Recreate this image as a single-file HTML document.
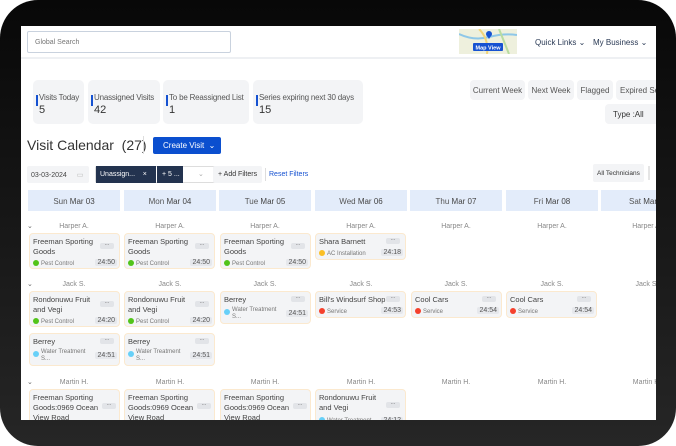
<!DOCTYPE html>
<html><head><meta charset="utf-8"><style>
*{box-sizing:border-box;margin:0;padding:0}
body{width:676px;height:446px;background:#fff;font-family:"Liberation Sans",sans-serif;position:relative;overflow:hidden}
.frame{position:absolute;left:0;top:0;width:676px;height:446px;border-radius:38px;background:linear-gradient(180deg,#080808,#1a1a1a 60%,#262626)}
.scr{position:absolute;left:21px;top:26px;width:635px;height:394px;background:#fff;overflow:hidden}
.a{position:absolute}
.t{font-size:8px;color:#333;white-space:nowrap}
.stat{position:absolute;top:54px;height:44px;background:#f3f4f6;border-radius:5px}
.stat .bar{position:absolute;left:3px;top:15px;width:2px;height:11px;background:#1652d1}
.stat .l{position:absolute;left:6px;top:13px;font-size:8px;letter-spacing:-0.2px;color:#555;white-space:nowrap}
.stat .n{position:absolute;left:6px;top:24px;font-size:11px;color:#333}
.btn{position:absolute;top:54px;height:20px;background:#f3f4f6;border-radius:4px;font-size:8px;color:#555;padding-top:6px;text-align:center;white-space:nowrap}
.dh{position:absolute;top:164px;width:92px;height:21px;background:#e3ecfa;font-size:8px;color:#555;text-align:center;padding-top:7px}
.dh b{color:#444;font-weight:normal}
.nm{position:absolute;font-size:7px;color:#888;width:92px;text-align:center}
.c{position:absolute;width:91px;background:#f3f4f6;border:1px solid #fbe9cf;border-radius:4px}
.c .ti{position:absolute;left:3px;top:3px;font-size:7.5px;color:#444;line-height:10px;width:70px}
.c .d{position:absolute;right:5px;width:14px;height:6px;background:#e2e4e8;border-radius:2px;font-size:5px;line-height:4px;text-align:center;color:#444}
.c .s{position:absolute;left:3px;font-size:6px;color:#777;white-space:nowrap}
.c .s i{display:inline-block;width:6px;height:6px;border-radius:50%;vertical-align:-1px;margin-right:2px}
.c .tm{position:absolute;right:2px;font-size:7px;color:#555;background:#e6e8ec;padding:0 2px;border-radius:2px}
.chev{position:absolute;left:6px;font-size:7px;color:#666}
</style></head><body>
<div class="frame"></div>
<div class="scr">
 <div class="a" style="left:6px;top:5px;width:204px;height:22px;border:1px solid #c9d2de;border-radius:2px"></div>
 <div class="a t" style="left:14px;top:13px;font-size:7px;color:#777">Global Search</div>
 <div class="a" style="left:0;top:31px;width:635px;height:2px;background:#eef0f3"></div>
 <svg class="a" style="left:438px;top:3px" width="58" height="25" viewBox="0 0 58 25"><rect width="58" height="25" fill="#eef0dd"/><path d="M0 5 Q15 12 30 8 T58 6" stroke="#8ec7e8" stroke-width="2" fill="none"/><path d="M20 0 Q30 10 28 25" stroke="#f2d47a" stroke-width="2" fill="none"/><path d="M40 0 L50 25" stroke="#b8dca0" stroke-width="2" fill="none"/><circle cx="30" cy="5" r="3" fill="#1652d1"/><path d="M27.5 6 L30 10 L32.5 6z" fill="#1652d1"/><rect x="14" y="14" width="30" height="8" rx="1" fill="#1652d1"/><text x="29" y="20.3" font-size="5.5" fill="#fff" text-anchor="middle" font-family="Liberation Sans" font-weight="bold">Map View</text></svg>
 <div class="a t" style="left:514px;top:12px;font-size:8px;color:#2a3a55">Quick Links ⌄</div>
 <div class="a t" style="left:572px;top:12px;font-size:8px;color:#2a3a55">My Business ⌄</div>

 <div class="stat" style="left:12px;width:51px"><div class="bar"></div><div class="l">Visits Today</div><div class="n">5</div></div>
 <div class="stat" style="left:67px;width:72px"><div class="bar"></div><div class="l">Unassigned Visits</div><div class="n">42</div></div>
 <div class="stat" style="left:142px;width:86px"><div class="bar"></div><div class="l">To be Reassigned List</div><div class="n">1</div></div>
 <div class="stat" style="left:232px;width:110px"><div class="bar"></div><div class="l">Series expiring next 30 days</div><div class="n">15</div></div>
 <div class="btn" style="left:449px;width:55px">Current Week</div>
 <div class="btn" style="left:507px;width:46px">Next Week</div>
 <div class="btn" style="left:556px;width:36px">Flagged</div>
 <div class="btn" style="left:595px;width:50px;text-align:left;padding-left:4px">Expired Se</div>
 <div class="btn" style="left:584px;top:78px;width:60px;color:#333;text-align:left;padding-left:8px">Type :All</div>

 <div class="a" style="left:6px;top:111px;font-size:14px;color:#333;white-space:nowrap">Visit Calendar &nbsp;(27)</div>
 <div class="a" style="left:122px;top:110px;width:1px;height:18px;background:#ddd"></div>
 <div class="a" style="left:132px;top:111px;width:68px;height:17px;background:#0b4fcf;border-radius:2px;color:#fff;font-size:8px;padding:4px 0 0 10px;white-space:nowrap">Create Visit &nbsp;⌄</div>

 <div class="a" style="left:6px;top:140px;width:62px;height:17px;background:#f3f4f6;border-radius:2px;font-size:7px;color:#444;padding:5px 0 0 4px;white-space:nowrap">03-03-2024 <span style="color:#bbb;margin-left:8px">▭</span></div>
 <div class="a" style="left:74px;top:140px;width:130px;height:17px;border:1px solid #ddd;border-radius:2px"></div>
 <div class="a" style="left:75px;top:140px;width:60px;height:17px;background:#23334f;color:#fff;font-size:7px;padding:5px 0 0 4px;white-space:nowrap">Unassign... &nbsp;&nbsp; ×</div>
 <div class="a" style="left:136px;top:140px;width:26px;height:17px;background:#23334f;color:#fff;font-size:7px;padding:5px 0 0 5px;white-space:nowrap">+ 5 ...</div>
 <div class="a t" style="left:177px;top:144px;color:#aaa;font-size:7px">⌄</div>
 <div class="a" style="left:192px;top:140px;width:49px;height:17px;background:#f3f4f6;border-radius:2px;font-size:7px;color:#333;padding:5px 0 0 5px;white-space:nowrap">+ Add Filters</div>
 <div class="a" style="left:244px;top:142px;width:1px;height:13px;background:#ddd"></div>
 <div class="a t" style="left:248px;top:145px;font-size:7px;color:#1652d1">Reset Filters</div>
 <div class="a" style="left:572px;top:138px;width:51px;height:18px;background:#f3f4f6;border-radius:2px;font-size:6.5px;color:#333;padding:6px 0 0 4px;white-space:nowrap">All Technicians</div>
 <div class="a" style="left:627px;top:140px;width:2px;height:14px;background:#e5e5e5"></div>

 <div class="dh" style="left:7px">Sun <b>Mar 03</b></div>
 <div class="dh" style="left:103px">Mon <b>Mar 04</b></div>
 <div class="dh" style="left:198px">Tue <b>Mar 05</b></div>
 <div class="dh" style="left:294px">Wed <b>Mar 06</b></div>
 <div class="dh" style="left:389px">Thu <b>Mar 07</b></div>
 <div class="dh" style="left:485px">Fri <b>Mar 08</b></div>
 <div class="dh" style="left:580px;text-align:left;padding-left:28px;white-space:nowrap">Sat <b>Mar 09</b></div>

 <div class="chev" style="top:196px">⌄</div><div class="chev" style="top:254px">⌄</div><div class="chev" style="top:352px">⌄</div>
 <div class="nm" style="left:7px;top:197px">Harper A.</div><div class="nm" style="left:103px;top:197px">Harper A.</div><div class="nm" style="left:198px;top:197px">Harper A.</div><div class="nm" style="left:294px;top:197px">Harper A.</div><div class="nm" style="left:389px;top:197px">Harper A.</div><div class="nm" style="left:485px;top:197px">Harper A.</div><div class="nm" style="left:580px;top:197px">Harper A.</div>
 <div class="nm" style="left:7px;top:255px">Jack S.</div><div class="nm" style="left:103px;top:255px">Jack S.</div><div class="nm" style="left:198px;top:255px">Jack S.</div><div class="nm" style="left:294px;top:255px">Jack S.</div><div class="nm" style="left:389px;top:255px">Jack S.</div><div class="nm" style="left:485px;top:255px">Jack S.</div><div class="nm" style="left:580px;top:255px">Jack S.</div>
 <div class="nm" style="left:7px;top:353px">Martin H.</div><div class="nm" style="left:103px;top:353px">Martin H.</div><div class="nm" style="left:198px;top:353px">Martin H.</div><div class="nm" style="left:294px;top:353px">Martin H.</div><div class="nm" style="left:389px;top:353px">Martin H.</div><div class="nm" style="left:485px;top:353px">Martin H.</div><div class="nm" style="left:580px;top:353px">Martin H.</div>

 <div class="c" style="left:8px;top:207px;height:36px"><div class="ti">Freeman Sporting Goods</div><div class="d" style="top:9px">···</div><div class="s" style="top:26px"><i style="background:#52c41a"></i>Pest Control</div><div class="tm" style="top:25px">24:50</div></div>
 <div class="c" style="left:103px;top:207px;height:36px"><div class="ti">Freeman Sporting Goods</div><div class="d" style="top:9px">···</div><div class="s" style="top:26px"><i style="background:#52c41a"></i>Pest Control</div><div class="tm" style="top:25px">24:50</div></div>
 <div class="c" style="left:199px;top:207px;height:36px"><div class="ti">Freeman Sporting Goods</div><div class="d" style="top:9px">···</div><div class="s" style="top:26px"><i style="background:#52c41a"></i>Pest Control</div><div class="tm" style="top:25px">24:50</div></div>
 <div class="c" style="left:294px;top:207px;height:27px"><div class="ti">Shara Barnett</div><div class="d" style="top:4px">···</div><div class="s" style="top:16px"><i style="background:#fbbf24"></i>AC Installation</div><div class="tm" style="top:15px">24:18</div></div>

 <div class="c" style="left:8px;top:265px;height:36px"><div class="ti">Rondonuwu Fruit and Vegi</div><div class="d" style="top:9px">···</div><div class="s" style="top:26px"><i style="background:#52c41a"></i>Pest Control</div><div class="tm" style="top:25px">24:20</div></div>
 <div class="c" style="left:103px;top:265px;height:36px"><div class="ti">Rondonuwu Fruit and Vegi</div><div class="d" style="top:9px">···</div><div class="s" style="top:26px"><i style="background:#52c41a"></i>Pest Control</div><div class="tm" style="top:25px">24:20</div></div>
 <div class="c" style="left:199px;top:265px;height:33px"><div class="ti">Berrey</div><div class="d" style="top:4px">···</div><div class="s" style="top:15px;line-height:7px"><i style="background:#67d0f8;vertical-align:-4px"></i><span style="display:inline-block;vertical-align:top">Water Treatment<br>S...</span></div><div class="tm" style="top:18px">24:51</div></div>
 <div class="c" style="left:294px;top:265px;height:27px"><div class="ti">Bill's Windsurf Shop</div><div class="d" style="top:4px">···</div><div class="s" style="top:16px"><i style="background:#f5402c"></i>Service</div><div class="tm" style="top:15px">24:53</div></div>
 <div class="c" style="left:390px;top:265px;height:27px"><div class="ti">Cool Cars</div><div class="d" style="top:4px">···</div><div class="s" style="top:16px"><i style="background:#f5402c"></i>Service</div><div class="tm" style="top:15px">24:54</div></div>
 <div class="c" style="left:485px;top:265px;height:27px"><div class="ti">Cool Cars</div><div class="d" style="top:4px">···</div><div class="s" style="top:16px"><i style="background:#f5402c"></i>Service</div><div class="tm" style="top:15px">24:54</div></div>
 <div class="c" style="left:8px;top:307px;height:33px"><div class="ti">Berrey</div><div class="d" style="top:4px">···</div><div class="s" style="top:15px;line-height:7px"><i style="background:#67d0f8;vertical-align:-4px"></i><span style="display:inline-block;vertical-align:top">Water Treatment<br>S...</span></div><div class="tm" style="top:18px">24:51</div></div>
 <div class="c" style="left:103px;top:307px;height:33px"><div class="ti">Berrey</div><div class="d" style="top:4px">···</div><div class="s" style="top:15px;line-height:7px"><i style="background:#67d0f8;vertical-align:-4px"></i><span style="display:inline-block;vertical-align:top">Water Treatment<br>S...</span></div><div class="tm" style="top:18px">24:51</div></div>

 <div class="c" style="left:8px;top:363px;height:40px"><div class="ti" style="width:78px">Freeman Sporting Goods:0969 Ocean View Road</div><div class="d" style="top:13px;right:3px">···</div></div>
 <div class="c" style="left:103px;top:363px;height:40px"><div class="ti" style="width:78px">Freeman Sporting Goods:0969 Ocean View Road</div><div class="d" style="top:13px;right:3px">···</div></div>
 <div class="c" style="left:199px;top:363px;height:40px"><div class="ti" style="width:78px">Freeman Sporting Goods:0969 Ocean View Road</div><div class="d" style="top:13px;right:3px">···</div></div>
 <div class="c" style="left:294px;top:363px;height:40px"><div class="ti">Rondonuwu Fruit and Vegi</div><div class="d" style="top:12px">···</div><div class="s" style="top:27px"><i style="background:#67d0f8"></i>Water Treatment</div><div class="tm" style="top:27px">24:12</div></div>
</div>
</body></html>
